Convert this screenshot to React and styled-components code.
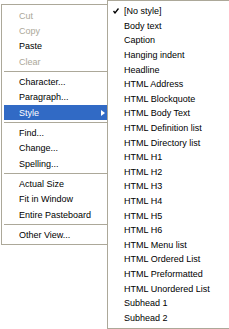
import styled, { createGlobalStyle } from "styled-components";

const GlobalStyle = createGlobalStyle`
  html, body { margin: 0; padding: 0; background: #fff; overflow: hidden; }
  body { font-family: "Liberation Sans", Arial, sans-serif; }
`;

const mainItems = [
  { label: "Cut", disabled: true },
  { label: "Copy", disabled: true },
  { label: "Paste" },
  { label: "Clear", disabled: true },
  "sep",
  { label: "Character..." },
  { label: "Paragraph..." },
  { label: "Style", active: true, sub: true },
  "sep",
  { label: "Find..." },
  { label: "Change..." },
  { label: "Spelling..." },
  "sep",
  { label: "Actual Size" },
  { label: "Fit in Window" },
  { label: "Entire Pasteboard" },
  "sep",
  { label: "Other View..." },
];

const styles = [
  "[No style]",
  "Body text",
  "Caption",
  "Hanging indent",
  "Headline",
  "HTML Address",
  "HTML Blockquote",
  "HTML Body Text",
  "HTML Definition list",
  "HTML Directory list",
  "HTML H1",
  "HTML H2",
  "HTML H3",
  "HTML H4",
  "HTML H5",
  "HTML H6",
  "HTML Menu list",
  "HTML Ordered List",
  "HTML Preformatted",
  "HTML Unordered List",
  "Subhead 1",
  "Subhead 2",
];

const Stage = styled.div`
  display: flex;
  align-items: flex-start;
  width: 229px;
  height: 329px;
  padding-left: 1px;
  box-sizing: border-box;
`;

const Menu = styled.div`
  display: flex;
  flex-direction: column;
  flex-shrink: 0;
  background: #fff;
  border: 1px solid #aca899;
  box-sizing: border-box;
  font-size: 9px;
  color: #000;
`;

const MainMenu = styled(Menu)`
  margin-top: 4px;
  width: 107px;
  padding: 3px 0 1px 2px;
`;

const SubMenu = styled(Menu)`
  margin-left: -1px;
  width: 140px;
  padding: 3px 2px 3px 2px;
`;

const Item = styled.div`
  display: flex;
  align-items: center;
  height: ${(p) => p.$h}px;
  padding-left: ${(p) => p.$indent}px;
  padding-right: 2px;
  white-space: nowrap;
  color: ${(p) => (p.$active ? "#fff" : p.$disabled ? "#aca899" : "#000")};
  background: ${(p) => (p.$active ? "#316ac5" : "transparent")};
`;

const Gutter = styled.span`
  width: 14px;
  flex-shrink: 0;
  display: flex;
  align-items: center;
  padding-left: 3px;
  box-sizing: border-box;
`;

const Separator = styled.div`
  height: 5px;
  display: flex;
  align-items: center;
  &::after {
    content: "";
    flex: 1;
    height: 1px;
    background: #aca899;
  }
`;

const Arrow = styled.span`
  margin-left: auto;
  width: 0;
  height: 0;
  border-top: 3.5px solid transparent;
  border-bottom: 3.5px solid transparent;
  border-left: 4px solid #fff;
`;

export default function App() {
  return (
    <Stage>
      <GlobalStyle />
      <MainMenu>
        {mainItems.map((it, i) =>
          it === "sep" ? (
            <Separator key={i} />
          ) : (
            <Item
              key={i}
              $h={15.33}
              $indent={15}
              $active={it.active}
              $disabled={it.disabled}
            >
              {it.label}
              {it.sub && <Arrow />}
            </Item>
          )
        )}
      </MainMenu>
      <SubMenu>
        {styles.map((s, i) => (
          <Item key={s} $h={14.6} $indent={0}>
            <Gutter>
              {i === 0 && (
                <svg width="6" height="6" viewBox="0 0 6 6">
                  <path d="M0.5 3 L2 5 L5.5 0.5" stroke="#000" strokeWidth="1.3" fill="none" />
                </svg>
              )}
            </Gutter>
            {s}
          </Item>
        ))}
      </SubMenu>
    </Stage>
  );
}
